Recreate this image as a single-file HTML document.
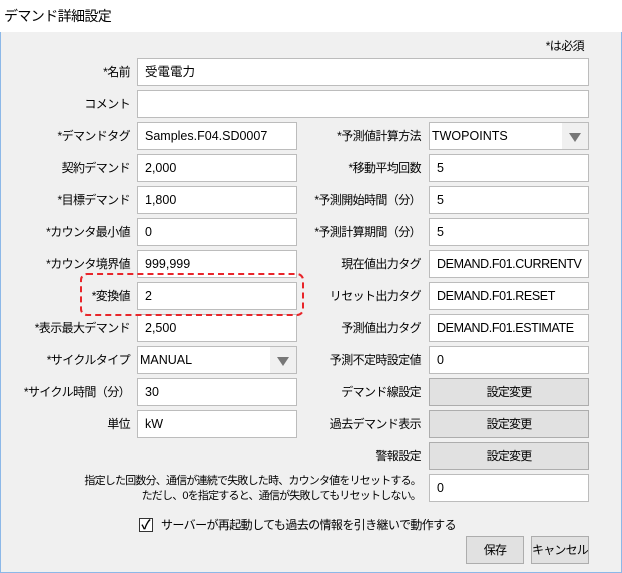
<!DOCTYPE html>
<html><head><meta charset="utf-8"><style>
*{box-sizing:border-box;margin:0;padding:0}
html,body{width:622px;height:573px;overflow:hidden}
body{background:#f0f0f0;font-family:"Liberation Sans","Noto Sans CJK JP",sans-serif;font-size:12px;color:#000;position:relative}
.win{position:absolute;left:0;top:0;width:622px;height:573px;border:1px solid #8cb8e8;border-top:none}
.title{position:absolute;left:0;top:0;width:622px;height:32px;background:#fff;font-size:14px;line-height:32px;padding-left:4px;letter-spacing:-0.6px}
.l{position:absolute;text-align:right;height:28px;line-height:28px;white-space:nowrap;letter-spacing:-0.6px}
.i{position:absolute;height:28px;background:#fff;border:1px solid #bcbcbc;line-height:26px;padding-left:7px;white-space:nowrap;overflow:hidden;font-size:12.5px}
.s{position:absolute;height:28px;background:#fff;border:1px solid #bcbcbc;line-height:26px;padding-left:2px;font-size:12.5px}
.s:after{content:"";position:absolute;right:0;top:0;width:26px;height:26px;background:#f0f0f0}
.s b{position:absolute;right:7px;top:10px;width:0;height:0;border-left:6px solid transparent;border-right:6px solid transparent;border-top:9px solid #777;z-index:2}
.b{position:absolute;height:28px;background:#e1e1e1;border:1px solid #adadad;text-align:center;line-height:26px;white-space:nowrap;letter-spacing:-0.8px}
</style></head><body><div class="win"></div>
<div class="title">デマンド詳細設定</div>
<div class="l" style="left:500px;top:32px;width:84px">*は必須</div>

<div class="l" style="left:0;top:58px;width:130px">*名前</div><div class="i" style="left:137px;top:58px;width:452px">受電電力</div>
<div class="l" style="left:0;top:90px;width:130px">コメント</div><div class="i" style="left:137px;top:90px;width:452px"></div>

<div class="l" style="left:0;top:122px;width:130px">*デマンドタグ</div><div class="i" style="left:137px;top:122px;width:160px">Samples.F04.SD0007</div>
<div class="l" style="left:0;top:154px;width:130px">契約デマンド</div><div class="i" style="left:137px;top:154px;width:160px">2,000</div>
<div class="l" style="left:0;top:186px;width:130px">*目標デマンド</div><div class="i" style="left:137px;top:186px;width:160px">1,800</div>
<div class="l" style="left:0;top:218px;width:130px">*カウンタ最小値</div><div class="i" style="left:137px;top:218px;width:160px">0</div>
<div class="l" style="left:0;top:250px;width:130px">*カウンタ境界値</div><div class="i" style="left:137px;top:250px;width:160px">999,999</div>
<div class="l" style="left:0;top:282px;width:130px">*変換値</div><div class="i" style="left:137px;top:282px;width:160px">2</div>
<div class="l" style="left:0;top:314px;width:130px">*表示最大デマンド</div><div class="i" style="left:137px;top:314px;width:160px">2,500</div>
<div class="l" style="left:0;top:346px;width:130px">*サイクルタイプ</div><div class="s" style="left:137px;top:346px;width:160px">MANUAL<b></b></div>
<div class="l" style="left:0;top:378px;width:130px">*サイクル時間（分）</div><div class="i" style="left:137px;top:378px;width:160px">30</div>
<div class="l" style="left:0;top:410px;width:130px">単位</div><div class="i" style="left:137px;top:410px;width:160px">kW</div>

<div style="position:absolute;left:80px;top:273px;width:224px;height:43px;border:2px dashed #e8252a;border-radius:7px"></div>

<div class="l" style="left:300px;top:122px;width:121px">*予測値計算方法</div><div class="s" style="left:429px;top:122px;width:160px">TWOPOINTS<b></b></div>
<div class="l" style="left:300px;top:154px;width:121px">*移動平均回数</div><div class="i" style="left:429px;top:154px;width:160px">5</div>
<div class="l" style="left:300px;top:186px;width:121px">*予測開始時間（分）</div><div class="i" style="left:429px;top:186px;width:160px">5</div>
<div class="l" style="left:300px;top:218px;width:121px">*予測計算期間（分）</div><div class="i" style="left:429px;top:218px;width:160px">5</div>
<div class="l" style="left:300px;top:250px;width:121px">現在値出力タグ</div><div class="i" style="left:429px;top:250px;width:160px;letter-spacing:-0.4px">DEMAND.F01.CURRENTV</div>
<div class="l" style="left:300px;top:282px;width:121px">リセット出力タグ</div><div class="i" style="left:429px;top:282px;width:160px;letter-spacing:-0.4px">DEMAND.F01.RESET</div>
<div class="l" style="left:300px;top:314px;width:121px">予測値出力タグ</div><div class="i" style="left:429px;top:314px;width:160px;letter-spacing:-0.4px">DEMAND.F01.ESTIMATE</div>
<div class="l" style="left:300px;top:346px;width:121px">予測不定時設定値</div><div class="i" style="left:429px;top:346px;width:160px">0</div>
<div class="l" style="left:300px;top:378px;width:121px">デマンド線設定</div><div class="b" style="left:429px;top:378px;width:160px">設定変更</div>
<div class="l" style="left:300px;top:410px;width:121px">過去デマンド表示</div><div class="b" style="left:429px;top:410px;width:160px">設定変更</div>
<div class="l" style="left:300px;top:442px;width:121px">警報設定</div><div class="b" style="left:429px;top:442px;width:160px">設定変更</div>

<div style="position:absolute;left:40px;top:474px;width:381px;text-align:right;font-size:11px;line-height:15px;letter-spacing:-0.8px;white-space:nowrap">指定した回数分、通信が連続で失敗した時、カウンタ値をリセットする。<br>ただし、0を指定すると、通信が失敗してもリセットしない。</div>
<div class="i" style="left:429px;top:474px;width:160px">0</div>

<div style="position:absolute;left:139px;top:518px;width:14px;height:14px;border:1px solid #333;background:#fff;font-size:13px;line-height:12px;text-align:center;font-weight:bold">✓</div>
<div style="position:absolute;left:161px;top:516px;line-height:18px;letter-spacing:-0.6px;white-space:nowrap">サーバーが再起動しても過去の情報を引き継いで動作する</div>

<div class="b" style="left:466px;top:536px;width:58px">保存</div>
<div class="b" style="left:531px;top:536px;width:58px">キャンセル</div>
</body></html>
